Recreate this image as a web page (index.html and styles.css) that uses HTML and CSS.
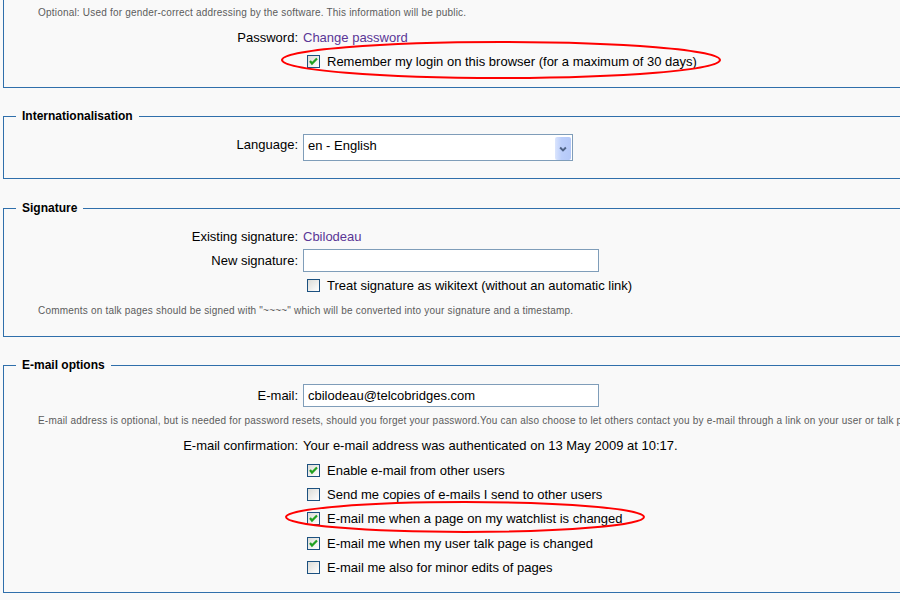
FILE: index.html
```html
<!DOCTYPE html>
<html lang="en">
<head>
  <meta charset="UTF-8" />
  <title>Preferences</title>
  <link rel="stylesheet" href="styles.css">
</head>
<body>
  <div class="prefs">
    <fieldset class="section first">
      <div class="tip tip-top">Optional: Used for gender-correct addressing by the software. This information will be public.</div>
      <div class="row">
        <div class="label">Password:</div>
        <div class="value"><a href="#">Change password</a></div>
      </div>
      <div class="row">
        <div class="label"></div>
        <div class="value"><label class="check"><span class="cb on"><svg viewBox="0 0 11 11"><polyline points="2,5 4,7.5 9,2.5" /></svg></span>Remember my login on this browser (for a maximum of 30 days)</label></div>
      </div>
    </fieldset>

    <fieldset class="section">
      <legend>Internationalisation</legend>
      <div class="row row-select">
        <div class="label">Language:</div>
        <div class="value">
          <div class="select">
            <span class="select-text">en - English</span>
            <span class="select-btn"><svg viewBox="0 0 16 24"><polyline points="5,11 8,14 11,11" /></svg></span>
          </div>
        </div>
      </div>
    </fieldset>

    <fieldset class="section">
      <legend>Signature</legend>
      <div class="row">
        <div class="label">Existing signature:</div>
        <div class="value"><a href="#">Cbilodeau</a></div>
      </div>
      <div class="row">
        <div class="label">New signature:</div>
        <div class="value"><input class="text" type="text" value=""></div>
      </div>
      <div class="row row-tall">
        <div class="label"></div>
        <div class="value"><label class="check"><span class="cb"></span>Treat signature as wikitext (without an automatic link)</label></div>
      </div>
      <div class="tip tip-sig">Comments on talk pages should be signed with "~~~~" which will be converted into your signature and a timestamp.</div>
    </fieldset>

    <fieldset class="section">
      <legend>E-mail options</legend>
      <div class="row">
        <div class="label">E-mail:</div>
        <div class="value"><input class="text" type="text" value="cbilodeau@telcobridges.com"></div>
      </div>
      <div class="tip tip-mail">E-mail address is optional, but is needed for password resets, should you forget your password.You can also choose to let others contact you by e-mail through a link on your user or talk page without needing to reveal your identity.</div>
      <div class="row row-confirm">
        <div class="label">E-mail confirmation:</div>
        <div class="value">Your e-mail address was authenticated on 13 May 2009 at 10:17.</div>
      </div>
      <div class="row row-tall">
        <div class="label"></div>
        <div class="value"><label class="check"><span class="cb on"><svg viewBox="0 0 11 11"><polyline points="2,5 4,7.5 9,2.5" /></svg></span>Enable e-mail from other users</label></div>
      </div>
      <div class="row">
        <div class="label"></div>
        <div class="value"><label class="check"><span class="cb"></span>Send me copies of e-mails I send to other users</label></div>
      </div>
      <div class="row">
        <div class="label"></div>
        <div class="value"><label class="check"><span class="cb on"><svg viewBox="0 0 11 11"><polyline points="2,5 4,7.5 9,2.5" /></svg></span>E-mail me when a page on my watchlist is changed</label></div>
      </div>
      <div class="row row-tall">
        <div class="label"></div>
        <div class="value"><label class="check"><span class="cb on"><svg viewBox="0 0 11 11"><polyline points="2,5 4,7.5 9,2.5" /></svg></span>E-mail me when my user talk page is changed</label></div>
      </div>
      <div class="row">
        <div class="label"></div>
        <div class="value"><label class="check"><span class="cb"></span>E-mail me also for minor edits of pages</label></div>
      </div>
    </fieldset>

    <!-- red annotation rings drawn over the form -->
    <svg class="marks" width="900" height="600" viewBox="0 0 900 600">
      <ellipse cx="501" cy="60" rx="219" ry="18" />
      <ellipse cx="465" cy="517" rx="179" ry="15" />
    </svg>
  </div>
</body>
</html>
```

FILE: styles.css
```css
html, body {
  margin: 0;
  overflow: hidden;
}
body {
  font-family: 'Liberation Sans', Arial, sans-serif;
  font-size: 13px;
  color: #000;
  background-color: #f9f9f9;
  width: 900px;
  height: 600px;
}
.prefs {
  position: relative;
  height: 600px;
  overflow: hidden;
}
.section {
  width: 1100px;
  margin: 21px 0 0 3px;
  padding: 9px 0 0 0;
  border: 1px solid #2f6fab;
  min-width: 0;
}
.section.first {
  margin-top: 0;
  border-top: none;
  padding: 0 0 14px 0;
}
.section:nth-of-type(2) {
  padding-bottom: 15px;
}
.section:nth-of-type(3) {
  margin-top: 22px;
  padding-bottom: 12px;
}
.section:nth-of-type(4) {
  padding-top: 11px;
  padding-bottom: 13px;
}
legend {
  font-size: 12px;
  font-weight: bold;
  line-height: 14px;
  padding: 0 6px;
  margin-left: 12px;
}
.row {
  display: grid;
  grid-template-columns: 294px 1fr;
  column-gap: 5px;
  align-items: center;
  height: 24px;
}
.row-tall {
  height: 25px;
}
.row-tall .check {
  padding-top: 2px;
}
.row-select {
  height: 31px;
}
.row-select .label {
  padding-bottom: 6px;
}
.row-confirm {
  height: 23px;
}
.label {
  text-align: right;
  white-space: nowrap;
}
.value {
  white-space: nowrap;
}
a {
  color: #5a3696;
  text-decoration: none;
}
.tip {
  font-size: 10px;
  color: #5c5c5c;
  padding-left: 34px;
  white-space: nowrap;
  display: flex;
  align-items: center;
  letter-spacing: 0.2px;
}
.tip-top {
  height: 25px;
}
.tip-sig {
  height: 27px;
}
.tip-mail {
  height: 27px;
}
.check {
  display: flex;
  align-items: center;
}
.cb {
  box-sizing: border-box;
  width: 13px;
  height: 13px;
  margin: 0 7px 0 4px;
  border: 1px solid #1c5180;
  background: linear-gradient(135deg, #dcdcd7, #ffffff);
  display: flex;
}
.cb svg {
  width: 11px;
  height: 11px;
}
.cb polyline {
  fill: none;
  stroke: #21a121;
  stroke-width: 2.2;
}
.select {
  box-sizing: border-box;
  width: 270px;
  height: 27px;
  border: 1px solid #7f9db9;
  background: #fff;
  display: flex;
  align-items: center;
  justify-content: space-between;
  padding: 1px 1px 1px 4px;
}
.select-text {
  font-size: 13px;
  padding-bottom: 5px;
}
.select-btn {
  width: 16px;
  height: 23px;
  margin-top: 1px;
  border-radius: 2px;
  background: linear-gradient(90deg, #dbe5fd, #bccffb 40%, #b4c8f8);
  display: flex;
}
.select-btn svg {
  width: 16px;
  height: 23px;
}
.select-btn polyline {
  fill: none;
  stroke: #4d6185;
  stroke-width: 2;
}
.text {
  box-sizing: border-box;
  width: 296px;
  height: 23px;
  margin: 0;
  border: 1px solid #7f9db9;
  background: #fff;
  padding: 0 4px;
  font-family: 'Liberation Sans', Arial, sans-serif;
  font-size: 13px;
  color: #000;
  outline: none;
}
.marks {
  position: absolute;
  left: 0;
  top: 0;
  pointer-events: none;
}
.marks ellipse {
  fill: none;
  stroke: #ff0000;
  stroke-width: 2;
}
```
